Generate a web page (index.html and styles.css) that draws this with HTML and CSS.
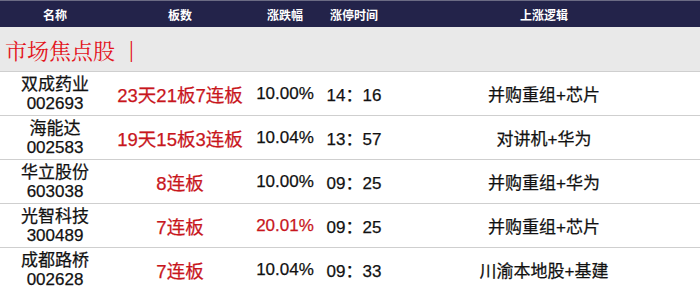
FILE: index.html
```html
<!DOCTYPE html>
<html lang="zh">
<head>
<meta charset="utf-8">
<link rel="stylesheet" href="styles.css">
</head>
<body>
<div class="table">
  <div class="head">
    <div>名称</div><div>板数</div><div>涨跌幅</div><div>涨停时间</div><div>上涨逻辑</div>
  </div>
  <div class="band"><span class="title">市场焦点股</span><span class="bar">|</span></div>
  <div class="row">
    <div class="name">双成药业<br>002693</div>
    <div class="red">23天21板7连板</div>
    <div class="pct">10.00%</div>
    <div class="time">14：16</div>
    <div class="logic">并购重组+芯片</div>
  </div>
  <div class="row">
    <div class="name">海能达<br>002583</div>
    <div class="red">19天15板3连板</div>
    <div class="pct">10.04%</div>
    <div class="time">13：57</div>
    <div class="logic">对讲机+华为</div>
  </div>
  <div class="row">
    <div class="name">华立股份<br>603038</div>
    <div class="red">8连板</div>
    <div class="pct">10.00%</div>
    <div class="time">09：25</div>
    <div class="logic">并购重组+华为</div>
  </div>
  <div class="row">
    <div class="name">光智科技<br>300489</div>
    <div class="red">7连板</div>
    <div class="pct red">20.01%</div>
    <div class="time">09：25</div>
    <div class="logic">并购重组+芯片</div>
  </div>
  <div class="row">
    <div class="name">成都路桥<br>002628</div>
    <div class="red">7连板</div>
    <div class="pct">10.04%</div>
    <div class="time">09：33</div>
    <div class="logic">川渝本地股+基建</div>
  </div>
</div>
</body>
</html>
```
FILE: styles.css
```css
html, body {
  margin: 0;
  padding: 0;
  background: #ffffff;
}
.table {
  width: 700px;
  font-family: "Liberation Sans", "Noto Sans CJK SC", sans-serif;
  color: #111111;
}
.head, .row {
  display: grid;
  grid-template-columns: 110px 140px 70px 68px 1fr;
  align-items: center;
  text-align: center;
}
.head {
  height: 26px;
  border-top: 1px solid #6b6b84;
  background: #23234a;
  color: #ffffff;
  font-size: 12px;
  font-weight: bold;
  font-family: "Noto Sans CJK SC", sans-serif;
}
.band {
  height: 44px;
  display: flex;
  align-items: center;
  gap: 14px;
  background: #e9e9e9;
  color: #e3141c;
  font-family: "Noto Serif CJK SC", "Noto Sans CJK SC", serif;
  font-size: 22px;
  padding-left: 5px;
}
.bar {
  font-family: "Liberation Serif", serif;
  font-size: 24px;
}
.row {
  height: 43px;
  border-top: 1px solid #cfcfcf;
  font-size: 17px;
  -webkit-text-stroke: 0.25px currentColor;
}
.name {
  line-height: 19px;
  font-size: 17px;
}
.red {
  color: #c8161d;
  font-size: 18.5px;
}
.pct.red {
  font-size: 17px;
}
.time {
  white-space: nowrap;
}
```
